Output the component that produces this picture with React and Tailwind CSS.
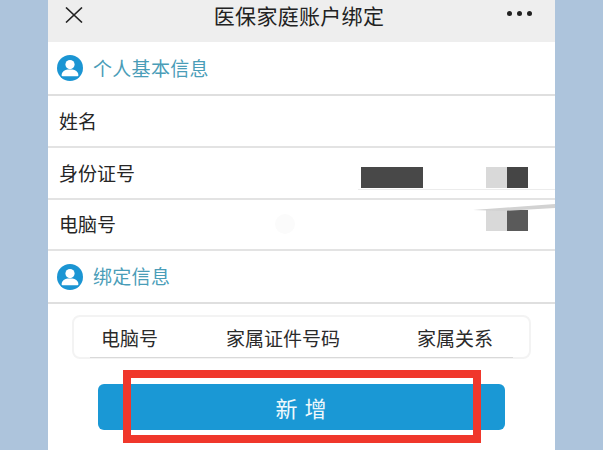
import React from 'react';

const font = { fontFamily: '"Noto Sans CJK SC", "Liberation Sans", sans-serif' };

function UserBadge() {
  return (
    <svg viewBox="0 0 26 26" className="w-[26px] h-[26px] shrink-0">
      <circle cx="13" cy="13" r="13" fill="#1b95d3" />
      <circle cx="13" cy="9.6" r="4.6" fill="#fff" />
      <path d="M4.6 20.4c0-3.9 3.6-5.6 5.8-5.9h5.2c2.2.3 5.8 2 5.8 5.9 0 .5-.4.8-.9.8H5.5c-.5 0-.9-.3-.9-.8z" fill="#fff" />
    </svg>
  );
}

function SectionTitle({ title, className }) {
  return (
    <div className={`flex items-center gap-[10px] pl-[9px] border-b-2 border-[#dfdfdf] ${className}`}>
      <UserBadge />
      <span className="text-[19px] leading-none text-[#4a9db8] tracking-[0.3px] mt-[-2px]">{title}</span>
    </div>
  );
}

function Row({ label, className, children }) {
  return (
    <div className={`flex items-center pl-[11px] border-b-2 border-[#e3e3e3] ${className}`}>
      <span className="text-[19px] leading-none text-[#262626] mt-[-2px]">{label}</span>
      {children}
    </div>
  );
}

export default function App() {
  return (
    <div style={font} className="w-[603px] h-[450px] overflow-hidden bg-[#adc4dc]">
      <div className="relative ml-[48px] w-[507px] h-[450px] bg-white">
        {/* top bar */}
        <div className="flex items-center justify-between h-[42px] pb-[14px] pl-[17px] pr-[23px] bg-[#eeeeee]">
          <svg viewBox="0 0 18 16" className="w-[18px] h-[16px] mt-[2px]" fill="none" stroke="#222" strokeWidth="1.6">
            <path d="M1 0.5 17 15.5M17 0.5 1 15.5" />
          </svg>
          <span className="ml-[8px] text-[21px] leading-none text-[#222] tracking-[0.3px] mt-[2px]">医保家庭账户绑定</span>
          <div className="flex gap-[5px] mt-[-2px]">
            <span className="w-[5px] h-[5px] rounded-full bg-[#222]" />
            <span className="w-[5px] h-[5px] rounded-full bg-[#222]" />
            <span className="w-[5px] h-[5px] rounded-full bg-[#222]" />
          </div>
        </div>

        <SectionTitle title="个人基本信息" className="h-[54px]" />
        <Row label="姓名" className="h-[52px]" />
        <Row label="身份证号" className="h-[52px]">
          <div className="ml-[226px] mt-[8px] w-[62px] h-[21px] bg-[#484848]" />
          <div className="ml-[63px] mt-[8px] w-[21px] h-[21px] bg-[#d9d9d9]" />
          <div className="mt-[8px] w-[21px] h-[21px] bg-[#454545]" />
        </Row>
        <Row label="电脑号" className="h-[51px]">
          <div className="ml-[370px] mt-[-8px] w-[21px] h-[21px] bg-[#d9d9d9]" />
          <div className="mt-[-8px] w-[21px] h-[21px] bg-[#5a5a5a]" />
        </Row>
        <SectionTitle title="绑定信息" className="h-[53px]" />

        {/* table header */}
        <div className="mt-[11px] mx-[24px] h-[44px] rounded-[8px] border-2 border-[#f3f3f3] px-[16px]">
          <div className="flex items-center h-[41px] pl-[11px] border-b border-[#d9d9d9] text-[19px] leading-none text-[#2b2b2b]">
            <span>电脑号</span>
            <span className="ml-[68px]">家属证件号码</span>
            <span className="ml-[77px]">家属关系</span>
          </div>
        </div>

        <div className="flex items-center justify-center mt-[25px] mx-[50px] h-[46px] pl-[6px] rounded-[6px] bg-[#1a98d5] text-[22px] leading-none text-[#eef8fc] tracking-[7px]">
          新增
        </div>

        {/* faint scan marks left over the rows */}
        <svg viewBox="0 0 507 60" className="absolute left-0 top-[180px] w-[507px] h-[60px]" fill="none">
          <path d="M310 9.5H507" stroke="#ececec" />
          <path d="M425 30 507 24V28L455 31z" fill="#d2d2d2" />
          <circle cx="237" cy="44" r="10" fill="#fbfbfb" />
        </svg>

        {/* red annotation box drawn over the button */}
        <div className="absolute left-[75px] top-[370px] w-[358px] h-[73px] border-[8px] border-[#f0372b]" />
      </div>
    </div>
  );
}
